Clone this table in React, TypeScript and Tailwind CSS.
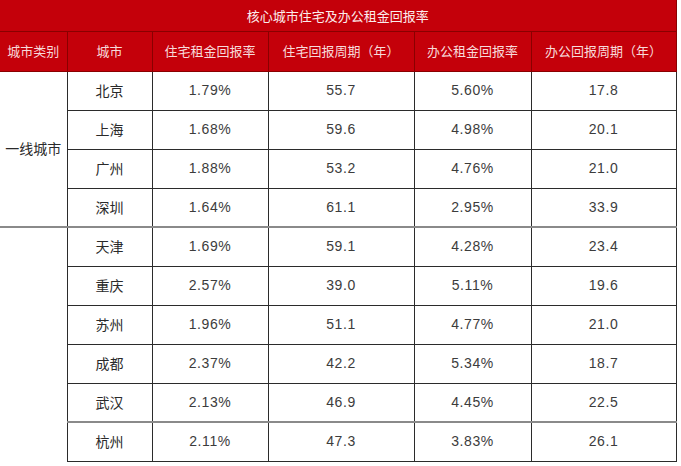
const rows = [
  { city: "北京", a: "1.79%", b: "55.7", c: "5.60%", d: "17.8" },
  { city: "上海", a: "1.68%", b: "59.6", c: "4.98%", d: "20.1" },
  { city: "广州", a: "1.88%", b: "53.2", c: "4.76%", d: "21.0" },
  { city: "深圳", a: "1.64%", b: "61.1", c: "2.95%", d: "33.9" },
  { city: "天津", a: "1.69%", b: "59.1", c: "4.28%", d: "23.4" },
  { city: "重庆", a: "2.57%", b: "39.0", c: "5.11%", d: "19.6" },
  { city: "苏州", a: "1.96%", b: "51.1", c: "4.77%", d: "21.0" },
  { city: "成都", a: "2.37%", b: "42.2", c: "5.34%", d: "18.7" },
  { city: "武汉", a: "2.13%", b: "46.9", c: "4.45%", d: "22.5" },
  { city: "杭州", a: "2.11%", b: "47.3", c: "3.83%", d: "26.1" },
];

const headers = ["城市类别", "城市", "住宅租金回报率", "住宅回报周期（年）", "办公租金回报率", "办公回报周期（年）"];

const cjk = "font-['Noto_Sans_CJK_SC','Noto_Sans',sans-serif]";
const num = "font-['Liberation_Sans','DejaVu_Sans',sans-serif] tracking-[0.6px] text-[#3c3c3c]";

export default function App() {
  return (
    <div className="w-[681px] h-[466px] bg-white overflow-hidden">
      <table className="w-[676px] table-fixed border-collapse">
        <colgroup>
          <col className="w-[67px]" />
          <col className="w-[85px]" />
          <col className="w-[116px]" />
          <col className="w-[146px]" />
          <col className="w-[117px]" />
          <col className="w-[145px]" />
        </colgroup>
        <thead>
          <tr className="h-[31px]">
            <th
              colSpan={6}
              className={`bg-[#c4000a] border-b border-r border-[#8a0000] text-[13px] font-normal text-[#fbecec] ${cjk}`}
            >
              核心城市住宅及办公租金回报率
            </th>
          </tr>
          <tr className="h-[40px]">
            {headers.map((h) => (
              <th
                key={h}
                className={`bg-[#c4000a] border-r border-b border-[#8a0000] text-[13px] font-normal text-[#f7dada] ${cjk}`}
              >
                {h}
              </th>
            ))}
          </tr>
        </thead>
        <tbody className="text-[14px] text-[#2a2a2a]">
          {rows.map((r, i) => {
            const groupTop = i === 4;
            const grayTop = i === 4 || i === 9;
            const cell = `text-center border-r border-b border-[#2b2b2b] ${
              grayTop ? "border-t-2 border-t-[#8a8a8a]" : ""
            }`;
            return (
              <tr key={r.city} className="h-[39px]">
                {i === 0 && (
                  <td rowSpan={4} className={`text-center border-r border-[#2b2b2b] ${cjk}`}>
                    一线城市
                  </td>
                )}
                {groupTop && (
                  <td rowSpan={6} className="border-r border-t-2 border-[#2b2b2b] border-t-[#8a8a8a]" />
                )}
                <td className={`${cell} ${cjk}`}>{r.city}</td>
                <td className={`${cell} ${num}`}>{r.a}</td>
                <td className={`${cell} ${num}`}>{r.b}</td>
                <td className={`${cell} ${num}`}>{r.c}</td>
                <td className={`${cell} ${num}`}>{r.d}</td>
              </tr>
            );
          })}
        </tbody>
      </table>
    </div>
  );
}
